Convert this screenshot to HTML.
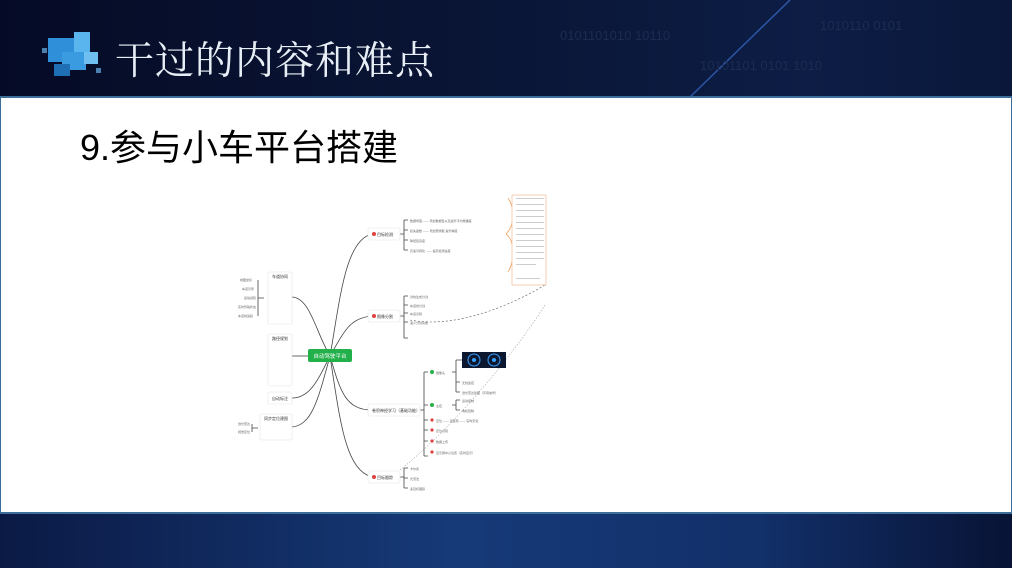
<!DOCTYPE html>
<html><head><meta charset="utf-8"><style>
html,body{margin:0;padding:0}
body{width:1012px;height:568px;overflow:hidden;position:relative;background:#0a1a40;font-family:"Liberation Sans","Noto Sans CJK SC",sans-serif}
.top{position:absolute;left:0;top:0;width:1012px;height:97px;background:linear-gradient(90deg,#050b26 0%,#0a1637 50%,#0d1d45 80%,#0a173a 100%)}
.bot{position:absolute;left:0;top:512px;width:1012px;height:56px;background:linear-gradient(90deg,#0b1a45 0%,#163a78 45%,#12306a 75%,#081335 100%)}
.panel{position:absolute;left:0;top:96px;width:1010px;height:414px;background:#fff;border:1px solid #3d6e9a;border-top:2px solid #3d6e9a;border-bottom:2px solid #3d6e9a}
.title{position:absolute;left:115px;top:33px;font-family:"Noto Serif CJK SC","Liberation Serif",serif;font-size:39px;color:#e8eef5;letter-spacing:1px;line-height:50px}
.sub{position:absolute;left:80px;top:126px;font-size:36px;color:#000;line-height:44px;font-family:"Liberation Sans","Noto Sans CJK SC",sans-serif}
svg text{font-family:"Liberation Sans","Noto Sans CJK SC",sans-serif}
</style></head><body>
<div class="top">
<svg width="1012" height="97" style="position:absolute;left:0;top:0">
<line x1="690" y1="97" x2="790" y2="0" stroke="#3a6fd0" stroke-width="1.5" opacity=".7"/>
<text x="560" y="40" fill="#1c2c50" font-size="13">0101101010 10110</text>
<text x="700" y="70" fill="#1c2c50" font-size="13">10101101 0101 1010</text>
<text x="820" y="30" fill="#1c2c50" font-size="13">1010110 0101</text>
</svg>
<svg width="70" height="60" style="position:absolute;left:40px;top:28px">
<rect x="8" y="10" width="28" height="24" fill="#2f8fd8"/>
<rect x="34" y="4" width="16" height="20" fill="#5ab5ee"/>
<rect x="22" y="24" width="24" height="18" fill="#3a9be0"/>
<rect x="44" y="24" width="14" height="12" fill="#6fc0f0"/>
<rect x="14" y="36" width="16" height="12" fill="#1f6fb4"/>
<rect x="56" y="40" width="5" height="5" fill="#4a7fae"/>
<rect x="2" y="20" width="5" height="5" fill="#4a7fae"/>
</svg>
<div class="title">干过的内容和难点</div>
</div>
<div class="bot"></div>
<div class="panel"></div>
<div class="sub">9.参与小车平台搭建</div>
<svg width="1012" height="568" style="position:absolute;left:0;top:0" font-size="4" fill="#333">
<g fill="none" stroke="#444" stroke-width="0.8">
<path d="M330 356 C340 300 345 240 372 234"/>
<path d="M330 356 C345 330 350 318 372 316"/>
<path d="M330 356 C340 390 345 410 372 410"/>
<path d="M330 356 C340 420 345 470 372 477"/>
<path d="M330 356 C315 330 310 298 292 297"/>
<path d="M308 356 L292 356"/>
<path d="M330 356 C318 380 310 398 292 398"/>
<path d="M330 356 C318 400 312 425 292 427"/>
<path d="M400 234 H404 M404 220 V250 M404 220 H408 M404 230 H408 M404 240 H408 M404 250 H408"/>
<path d="M400 316 H404 M404 296 V338 M404 296 H408 M404 305 H408 M404 313 H408 M404 322 H408 M404 338 H408"/>
<path d="M420 410 H424 M424 372 V456 M424 372 H428 M424 405 H428 M424 420 H428 M424 430 H428 M424 441 H428 M424 456 H428"/>
<path d="M400 477 H404 M404 468 V488 M404 468 H408 M404 478 H408 M404 488 H408"/>
<path d="M452 372 H456 M456 360 V392 M456 360 H462 M456 382 H460 M456 392 H460"/>
<path d="M452 405 H456 M456 400 V410 M456 400 H460 M456 410 H460"/>
<path d="M258 280 V316 M258 298 H264"/>
<path d="M252 424 V432 M252 428 H258"/>
<path d="M508 198 C516 210 514 226 506 234 M506 234 C514 240 516 258 508 272" stroke="#e8a060"/>
</g>
<path d="M410 320 C460 330 520 300 545 285" fill="none" stroke="#555" stroke-width="0.6" stroke-dasharray="2,2"/>
<path d="M400 470 C450 430 510 360 545 305" fill="none" stroke="#777" stroke-width="0.5" stroke-dasharray="1.5,1.5"/>
<rect x="512" y="195" width="34" height="90" fill="#fff" stroke="#f0b080" stroke-width="0.6"/>
<g fill="#ccc"><rect x="516" y="198" width="28" height="1"/><rect x="516" y="204" width="28" height="1"/><rect x="516" y="210" width="28" height="1"/><rect x="516" y="216" width="28" height="1"/><rect x="516" y="222" width="28" height="1"/><rect x="516" y="228" width="28" height="1"/><rect x="516" y="234" width="28" height="1"/><rect x="516" y="240" width="28" height="1"/><rect x="516" y="246" width="28" height="1"/><rect x="516" y="252" width="28" height="1"/><rect x="516" y="258" width="28" height="1"/><rect x="516" y="264" width="20" height="1"/><rect x="516" y="278" width="24" height="1"/></g>
<rect x="308" y="349" width="44" height="13" rx="2" fill="#22b04a"/>
<text x="330" y="358" fill="#fff" font-size="5.5" text-anchor="middle">自动驾驶平台</text>
<g fill="#fff" stroke="#e4e4e4" stroke-width="0.6">
<rect x="368" y="228" width="32" height="12" rx="2"/>
<rect x="368" y="310" width="32" height="12" rx="2"/>
<rect x="368" y="404" width="52" height="12" rx="2"/>
<rect x="368" y="471" width="32" height="12" rx="2"/>
<rect x="268" y="272" width="24" height="52" rx="2"/>
<rect x="268" y="334" width="24" height="52" rx="2"/>
<rect x="268" y="392" width="24" height="12" rx="2"/>
<rect x="260" y="414" width="32" height="26" rx="2"/>
</g>
<g fill="#e04040"><circle cx="374" cy="234" r="2"/><circle cx="374" cy="316" r="2"/><circle cx="374" cy="477" r="2"/><circle cx="432" cy="420" r="1.6"/><circle cx="432" cy="430" r="1.6"/><circle cx="432" cy="441" r="1.6"/><circle cx="432" cy="452" r="1.6"/></g>
<g fill="#22b04a"><circle cx="432" cy="372" r="2"/><circle cx="432" cy="405" r="2"/></g>
<text x="377" y="236">目标检测</text><text x="377" y="318">图像分割</text>
<text x="372" y="412">卷积神经学习（基础功能）</text><text x="377" y="479">目标跟踪</text>
<text x="272" y="278">车道协同</text><text x="272" y="340">路径规划</text><text x="272" y="400">自动标注</text><text x="264" y="420">同步定位建图</text>
<g font-size="3" fill="#666">
<text x="410" y="222">数据增强 —— 增加数据集以及提升平均准确度</text><text x="410" y="232">损失函数 —— 增加预测框 提升精度</text><text x="410" y="242">降低复杂度</text><text x="410" y="252">高速可视化 —— 提高检测速度</text>
<text x="410" y="298">对抗生成分割</text><text x="410" y="307">车道线分割</text><text x="410" y="315">车道识别</text><text x="410" y="324">语义分割功能</text>
<text x="436" y="374">摄像头</text><text x="462" y="384">无线遥控</text><text x="462" y="394">激光雷达建图（声音信号）</text>
<text x="436" y="407">主控</text><text x="462" y="402">运动控制</text><text x="462" y="412">电机控制</text>
<text x="436" y="422">定位 —— 远距离 —— 实时定位</text><text x="436" y="432">定位识别</text><text x="436" y="443">数据上传</text><text x="436" y="454">显示屏中心位置（实时显示）</text>
<text x="410" y="470">卡尔曼</text><text x="410" y="480">光流法</text><text x="410" y="490">多目标跟踪</text>
<text x="240" y="281">地图坐标</text><text x="242" y="290">车道引导</text><text x="244" y="299">运动感知</text><text x="238" y="308">实时传输状态</text><text x="238" y="317">车道线追踪</text>
<text x="238" y="425">激光雷达</text><text x="238" y="433">视觉定位</text>
</g>
<rect x="462" y="352" width="44" height="16" fill="#0c1830"/>
<circle cx="474" cy="360" r="6" fill="none" stroke="#3aa0ff" stroke-width="1"/><circle cx="474" cy="360" r="2" fill="#3aa0ff"/>
<circle cx="494" cy="360" r="6" fill="none" stroke="#3aa0ff" stroke-width="1"/><circle cx="494" cy="360" r="2" fill="#3aa0ff"/>
</svg>
</body></html>
